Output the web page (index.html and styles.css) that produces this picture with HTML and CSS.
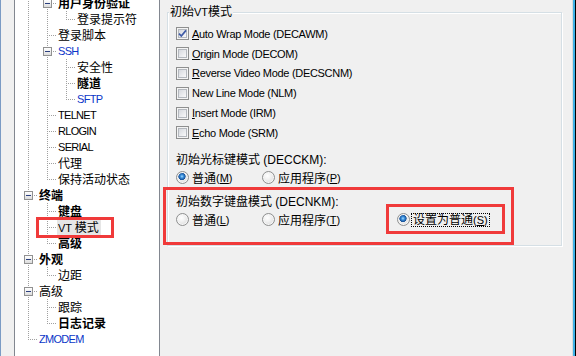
FILE: index.html
```html
<!DOCTYPE html>
<html lang="zh-CN">
<head>
<meta charset="utf-8">
<title>VT 模式</title>
<link rel="stylesheet" href="styles.css">
</head>
<body>
<div class="win">
  <div class="frame-left"></div>
  <div class="tree">
    <div class="tree-list">
      <div class="row"><span class="c pipe"></span><span class="c tee"><span class="exp"></span></span><span class="t b">用户身份验证</span></div>
      <div class="row"><span class="c pipe"></span><span class="c pipe"></span><span class="c elbow"></span><span class="t">登录提示符</span></div>
      <div class="row"><span class="c pipe"></span><span class="c tee"></span><span class="t">登录脚本</span></div>
      <div class="row"><span class="c pipe"></span><span class="c tee"><span class="exp"></span></span><span class="t l blue">SSH</span></div>
      <div class="row"><span class="c pipe"></span><span class="c pipe"></span><span class="c tee"></span><span class="t">安全性</span></div>
      <div class="row"><span class="c pipe"></span><span class="c pipe"></span><span class="c tee"></span><span class="t b">隧道</span></div>
      <div class="row"><span class="c pipe"></span><span class="c pipe"></span><span class="c elbow"></span><span class="t l blue">SFTP</span></div>
      <div class="row"><span class="c pipe"></span><span class="c tee"></span><span class="t l">TELNET</span></div>
      <div class="row"><span class="c pipe"></span><span class="c tee"></span><span class="t l">RLOGIN</span></div>
      <div class="row"><span class="c pipe"></span><span class="c tee"></span><span class="t l">SERIAL</span></div>
      <div class="row"><span class="c pipe"></span><span class="c tee"></span><span class="t">代理</span></div>
      <div class="row"><span class="c pipe"></span><span class="c elbow"></span><span class="t">保持活动状态</span></div>
      <div class="row"><span class="c tee"><span class="exp"></span></span><span class="t b">终端</span></div>
      <div class="row"><span class="c pipe"></span><span class="c tee"></span><span class="t b">键盘</span></div>
      <div class="row"><span class="c pipe"></span><span class="c tee"></span><span class="t sel"><span class="lat">VT</span> 模式</span></div>
      <div class="row"><span class="c pipe"></span><span class="c elbow"></span><span class="t b">高级</span></div>
      <div class="row"><span class="c tee"><span class="exp"></span></span><span class="t b">外观</span></div>
      <div class="row"><span class="c pipe"></span><span class="c elbow"></span><span class="t">边距</span></div>
      <div class="row"><span class="c tee"><span class="exp"></span></span><span class="t">高级</span></div>
      <div class="row"><span class="c pipe"></span><span class="c tee"></span><span class="t">跟踪</span></div>
      <div class="row"><span class="c pipe"></span><span class="c elbow"></span><span class="t b">日志记录</span></div>
      <div class="row"><span class="c elbow"></span><span class="t l blue">ZMODEM</span></div>
    </div>
  </div>

  <div class="panel">
    <div class="group">
      <div class="gtitle">初始<span class="lat">VT</span>模式</div>
      <div class="checks">
        <div class="chk"><span class="cb"><span class="cb-in"><svg class="tick" width="9" height="9" viewBox="0 0 9 9"><path d="M1 4.6 L3.3 7 L8 1.4" fill="none" stroke="#3f5ba6" stroke-width="1.7"/></svg></span></span><span class="ctxt"><u>A</u>uto Wrap Mode (DECAWM)</span></div>
        <div class="chk"><span class="cb"><span class="cb-in"></span></span><span class="ctxt"><u>O</u>rigin Mode (DECOM)</span></div>
        <div class="chk"><span class="cb"><span class="cb-in"></span></span><span class="ctxt"><u>R</u>everse Video Mode (DECSCNM)</span></div>
        <div class="chk"><span class="cb"><span class="cb-in"></span></span><span class="ctxt">New Line Mode (NLM)</span></div>
        <div class="chk"><span class="cb"><span class="cb-in"></span></span><span class="ctxt"><u>I</u>nsert Mode (IRM)</span></div>
        <div class="chk"><span class="cb"><span class="cb-in"></span></span><span class="ctxt"><u>E</u>cho Mode (SRM)</span></div>
      </div>

      <div class="sect">
        <div class="slabel">初始光标键模式 (DECCKM):</div>
        <div class="radios">
          <div class="rad"><span class="rb on"></span>普通<span class="lat">(<u>M</u>)</span></div>
          <div class="rad"><span class="rb"></span>应用程序<span class="lat">(<u>P</u>)</span></div>
        </div>
      </div>

      <div class="sect">
        <div class="slabel">初始数字键盘模式 (DECNKM):</div>
        <div class="radios">
          <div class="rad"><span class="rb"></span>普通<span class="lat">(<u>L</u>)</span></div>
          <div class="rad"><span class="rb"></span>应用程序<span class="lat">(<u>T</u>)</span></div>
          <div class="rad"><span class="rb on"></span><span class="focus">设置为普通<span class="lat">(<u>S</u>)</span></span></div>
        </div>
      </div>
    </div>
  </div>
  <div class="frame-right"></div>
</div>

<div class="mark mark-tree"></div>
<div class="mark mark-outer"></div>
<div class="mark mark-inner"></div>
</body>
</html>
```

FILE: styles.css
```css
html, body {
  margin: 0;
  padding: 0;
}

body {
  width: 576px;
  height: 356px;
  overflow: hidden;
  position: relative;
  background: #f0f0f0;
  color: #000;
  font-family: "Liberation Sans", "Noto Sans CJK SC", sans-serif;
  font-size: 12px;
}

.win {
  display: flex;
  height: 356px;
}

.frame-left {
  flex: none;
  width: 1px;
  background: #7b9bc4;
}

/* ---------- tree ---------- */
.tree {
  flex: none;
  width: 144px;
  margin-left: 13px;
  border-left: 1px solid #828790;
  border-right: 1px solid #828790;
  background: #fff;
  overflow: hidden;
}

.tree-list {
  margin-top: -5px;
  padding-left: 4px;
  font-family: "Noto Sans CJK SC", sans-serif;
  font-size: 12px;
}

.row {
  display: flex;
  height: 16px;
}

.c {
  flex: none;
  display: block;
  width: 19px;
  height: 16px;
}

.pipe {
  background: repeating-linear-gradient(to bottom, #a0a0a0 0 1px, transparent 1px 2px) 9px 0 / 1px 16px no-repeat;
}

.tee {
  background:
    repeating-linear-gradient(to bottom, #a0a0a0 0 1px, transparent 1px 2px) 9px 0 / 1px 16px no-repeat,
    repeating-linear-gradient(to right, #a0a0a0 0 1px, transparent 1px 2px) 11px 8px / 8px 1px no-repeat;
}

.elbow {
  background:
    repeating-linear-gradient(to bottom, #a0a0a0 0 1px, transparent 1px 2px) 9px 0 / 1px 9px no-repeat,
    repeating-linear-gradient(to right, #a0a0a0 0 1px, transparent 1px 2px) 11px 8px / 8px 1px no-repeat;
}

.exp {
  display: flex;
  align-items: center;
  justify-content: center;
  box-sizing: border-box;
  width: 9px;
  height: 9px;
  margin: 4px 0 0 5px;
  border: 1px solid #919191;
  background: linear-gradient(#ffffff, #dcdcdc);
}

.exp::after {
  content: "";
  width: 5px;
  height: 1px;
  background: #2b3f7e;
}

.t {
  padding: 0 2px 0 1px;
  line-height: 16px;
  white-space: nowrap;
}

.t.b {
  font-weight: 700;
}

.t.l {
  font-family: "Liberation Sans", sans-serif;
  font-size: 11px;
  letter-spacing: -0.7px;
}

.t.blue {
  color: #0b36c8;
}

.t.sel {
  background: #e6e6e6;
}

.lat {
  font-family: "Liberation Sans", sans-serif;
  font-size: 11px;
}

/* ---------- right panel ---------- */
.panel {
  flex: none;
  width: 412px;
  box-sizing: border-box;
  padding: 12px 0 0 7px;
}

.group {
  width: 395px;
  height: 234px;
  box-sizing: border-box;
  border: 1px solid #d5dfe5;
  padding: 0 0 0 8px;
  box-shadow: inset 1px 1px 0 #ffffff, 1px 1px 0 #ffffff;
}

.gtitle {
  width: fit-content;
  height: 16px;
  margin: -9px 0 0 -7px;
  padding: 0 1px;
  line-height: 16px;
  background: #f0f0f0;
}

.checks {
  margin-top: 4px;
}

.chk {
  display: flex;
  align-items: center;
  height: 19.8px;
}

.cb {
  flex: none;
  box-sizing: border-box;
  width: 13px;
  height: 13px;
  margin-right: 3px;
  padding: 1px;
  border: 1px solid #8e8f8f;
  background: #f4f4f4;
}

.cb-in {
  display: flex;
  align-items: center;
  justify-content: center;
  box-sizing: border-box;
  width: 9px;
  height: 9px;
  border: 1px solid #b4b8be;
  background: linear-gradient(135deg, #d6d9de, #f9f9fa);
}

.tick {
  flex: none;
}

.ctxt {
  font-size: 11px;
  letter-spacing: -0.3px;
  white-space: nowrap;
}

.sect {
  margin-top: 9px;
}

.sect + .sect {
  margin-top: 6px;
}

.slabel {
  height: 16px;
  line-height: 16px;
  white-space: nowrap;
}

.radios {
  display: grid;
  grid-template-columns: 86px 135px auto;
  align-items: center;
  height: 20px;
}

.rad {
  display: flex;
  align-items: center;
  white-space: nowrap;
}

.rb {
  flex: none;
  box-sizing: border-box;
  width: 13px;
  height: 13px;
  margin-right: 3px;
  border-radius: 50%;
  border: 1px solid #8e8f8f;
  background: radial-gradient(circle at 40% 35%, #ffffff 0, #f2f2f2 35%, #d3d3d3 100%);
  box-shadow: inset 0 0 0 1px #f6f6f6;
}

.rb.on {
  background:
    radial-gradient(circle at 45% 40%, #a6dcff 0, #3a8fdc 1.6px, #164f96 3.4px, rgba(22, 79, 150, 0) 3.9px),
    radial-gradient(circle at 40% 35%, #ffffff 0, #f2f2f2 35%, #d3d3d3 100%);
}

.focus {
  display: inline-block;
  height: 12px;
  line-height: 12px;
  margin-left: -1px;
  padding: 0 1px;
  outline: 1px dotted #000;
}

.frame-right {
  flex: none;
  width: 4px;
  background: linear-gradient(to right, #dadada 0 1px, #3fb1e6 1px 3px, #000 3px);
}

/* ---------- annotation boxes (overlay) ---------- */
.mark {
  position: absolute;
  box-sizing: border-box;
  border: 3px solid #f03a3a;
}

.mark-tree {
  left: 36px;
  top: 217px;
  width: 78px;
  height: 21px;
}

.mark-outer {
  left: 163px;
  top: 187px;
  width: 351px;
  height: 58px;
}

.mark-inner {
  left: 386px;
  top: 204px;
  width: 119px;
  height: 30px;
}
```
